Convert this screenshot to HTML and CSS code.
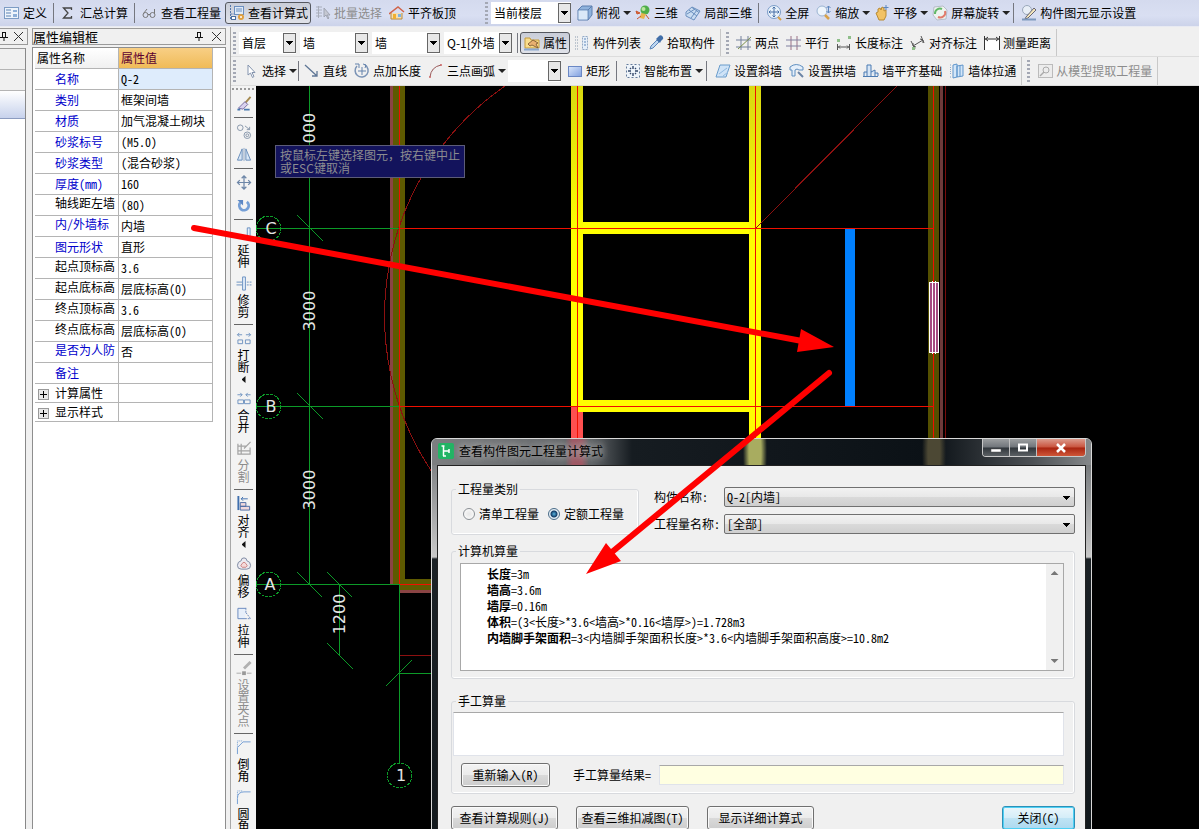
FILE: index.html
```html
<!DOCTYPE html>
<html lang="zh-CN">
<head>
<meta charset="utf-8">
<title>查看构件图元工程量计算式</title>
<link rel="stylesheet" href="styles.css">
</head>
<body>
<div class="app">
  <header class="bar bar-top">
    <div class="group group-first">
      <button class="tool"><svg class="ico" viewBox="0 0 16 16"><rect x=".5" y="2.5" width="14" height="11" fill="#eef4fb" stroke="#7d9cc4"/><path d="M2 5h5M2 8h5M2 11h5" stroke="#5b82b5"/><rect x="9" y="5" width="4" height="2" fill="#8fb0d8"/><rect x="9" y="9" width="4" height="3" fill="#8fb0d8"/></svg>定义</button>
      <i class="sep"></i>
      <button class="tool"><svg class="ico" viewBox="0 0 16 16"><path d="M10.500 5V3H2.500L7 8L2.500 13H10.500V11" fill="none" stroke="#444" stroke-width="1.300"/></svg>汇总计算</button>
      <i class="sep"></i>
      <button class="tool"><svg class="ico" viewBox="0 0 16 16"><g fill="none" stroke="#777"><circle cx="3.500" cy="10" r="2.500"/><circle cx="10.500" cy="10" r="2.500"/><path d="M6 10q1-2 2 0M1.500 8.500L5 4M12.500 8.500V4"/></g></svg>查看工程量</button>
      <button class="tool pressed"><svg class="ico" viewBox="0 0 16 16"><path d="M1.500 0v14H7M1.500 9H6" fill="none" stroke="#5577aa" stroke-dasharray="2 1"/><rect x="5.500" y="1.500" width="9" height="8" fill="#dfeaf7" stroke="#6b8fc0"/><path d="M7 4h6M7 6h6" stroke="#6b8fc0"/><rect x="2.500" y="11.500" width="4" height="3" fill="#fff" stroke="#4b6fa0"/><circle cx="12" cy="12" r="3" fill="#e0a040"/><circle cx="12" cy="12" r="1" fill="#fff"/></svg>查看计算式</button>
      <button class="tool" disabled><svg class="ico" viewBox="0 0 16 16"><path d="M1 2h6M1 5h6M1 8h6M1 11h6M3.500 1v12" stroke="#a9aebb" fill="none"/><path d="M9 3v9l2-2 2 4 1-1-2-3h3z" fill="#c5c8d2" stroke="#a0a5b2"/></svg>批量选择</button>
      <button class="tool"><svg class="ico" viewBox="0 0 16 16"><path d="M2 8v6h11V8" fill="#f5dfb0" stroke="#b88b3c"/><path d="M0 9L9 2l6 5" fill="none" stroke="#d0644a" stroke-width="1.500"/><path d="M4 9h3v5H4z" fill="#f0b030"/><rect x="9" y="9" width="3" height="3" fill="#7db4e6"/></svg>平齐板顶</button>
    </div>
    <div class="group">
      <i class="grip"></i>
      <select class="combo combo-floor" aria-label="楼层范围"><option>当前楼层</option></select>
      <button class="tool menu"><svg class="ico" viewBox="0 0 16 16"><path d="M1 5l4-4h10v9l-4 5H1z" fill="#8fb2dc" stroke="#5d7fae"/><path d="M1 5h10l4-4M11 5v10" fill="none" stroke="#5d7fae"/><rect x="1.500" y="5.500" width="9" height="9" fill="#dbe9f8"/></svg>俯视<i class="caret"></i></button>
      <button class="tool"><svg class="ico" viewBox="0 0 16 16"><circle cx="10" cy="5" r="4.500" fill="#4fae4a"/><circle cx="8.500" cy="4" r="2" fill="#bde6a0"/><path d="M6 8l5 1-2 5-4-1z" fill="#e8b54e"/><path d="M1 6l4 2-3 1zM2 14l4-3M14 14l-3-4" stroke="#c8552e" fill="#e06b3e"/></svg>三维</button>
      <button class="tool"><svg class="ico" viewBox="0 0 16 16"><path d="M1 7l6-5 8 4-6 9-8-4z" fill="#c9dcf2" stroke="#6a8fbe"/><path d="M4 5l8 6M7 2.500l7 5M2 9l8-5M6 13l6-8" stroke="#6a8fbe" fill="none"/></svg>局部三维</button>
      <i class="sep"></i>
      <button class="tool"><svg class="ico" viewBox="0 0 16 16"><circle cx="8" cy="7" r="6.500" fill="#e9f2fb" stroke="#7a9cc8"/><path d="M8 2v10M3 7h10M6.500 3.500L8 2l1.500 1.500M6.500 10.500L8 12l1.500-1.500M4.500 5.500L3 7l1.500 1.500M11.500 5.500L13 7l-1.500 1.500" stroke="#466fa6" fill="none"/><path d="M12 12l3 3" stroke="#d8a24a" stroke-width="2"/></svg>全屏</button>
      <button class="tool menu"><svg class="ico" viewBox="0 0 16 16"><circle cx="6" cy="6" r="5" fill="#eef5fc" stroke="#9bb4d2"/><path d="M9 10l4 4" stroke="#d8a24a" stroke-width="2.500"/><path d="M12.500 1v7M10.500 3l2-2 2 2M10.500 6l2 2 2-2" stroke="#5c86bd" fill="none"/></svg>缩放<i class="caret"></i></button>
      <button class="tool menu"><svg class="ico" viewBox="0 0 16 16"><path d="M2 8l2-1V4l2-1 1 2 1-3 2 1v3l2-1v6l-2 4H5z" fill="#f2c264" stroke="#b98a33"/><path d="M12 0v5M9.500 2.500h5" stroke="#5c86bd"/></svg>平移<i class="caret"></i></button>
      <button class="tool menu"><svg class="ico" viewBox="0 0 16 16"><path d="M2 2l9-1 4 4-1 9-9 1-4-5z" fill="#eef3ee" stroke="#b5bcc8"/><path d="M3 9a5 5 0 0 1 7-5" fill="none" stroke="#62b868" stroke-width="2"/><path d="M13 6a5 5 0 0 1-7 6" fill="none" stroke="#e07a6a" stroke-width="2"/></svg>屏幕旋转<i class="caret"></i></button>
      <i class="sep"></i>
      <button class="tool"><svg class="ico" viewBox="0 0 16 16"><circle cx="6" cy="5" r="4.500" fill="#e8eef6" stroke="#9aa7ba"/><path d="M5 12L13 3l2 2-8 8-3 1z" fill="#f4e6bb" stroke="#667"/><path d="M1 14.500h14" stroke="#7d98bd" stroke-width="2"/></svg>构件图元显示设置</button>
    </div>
  </header>

  <div class="main">
    <aside class="stub">
      <div class="panel-title"><svg class="pin" viewBox="0 0 8 9"><path d="M2.500 0v5M5.500 0v5M2 .5h4M0 5.500h8M4 6v3" stroke="#111" fill="none"/></svg><button class="close" aria-label="关闭"></button></div>
      <div class="stub-body"><div class="stub-cell"></div><div class="stub-cell"></div><div class="stub-sel"></div></div>
    </aside>

    <aside class="props">
      <div class="panel-title"><span class="title-text">属性编辑框</span><svg class="pin" viewBox="0 0 8 9"><path d="M2.500 0v5M5.500 0v5M2 .5h4M0 5.500h8M4 6v3" stroke="#111" fill="none"/></svg><button class="close" aria-label="关闭"></button></div>
      <div class="props-body">
        <table class="grid">
          <colgroup><col class="c-name"><col></colgroup>
          <thead><tr><th>属性名称</th><th class="vh">属性值</th></tr></thead>
          <tbody>
            <tr><th class="b">名称</th><td class="cur">Q-2</td></tr>
            <tr><th class="b">类别</th><td>框架间墙</td></tr>
            <tr><th class="b">材质</th><td>加气混凝土砌块</td></tr>
            <tr><th class="b">砂浆标号</th><td>(M5.0)</td></tr>
            <tr><th class="b">砂浆类型</th><td>(混合砂浆)</td></tr>
            <tr><th class="b">厚度(mm)</th><td>160</td></tr>
            <tr><th class="up">轴线距左墙</th><td>(80)</td></tr>
            <tr><th class="b up">内/外墙标</th><td>内墙</td></tr>
            <tr><th class="b">图元形状</th><td>直形</td></tr>
            <tr><th class="up">起点顶标高</th><td>3.6</td></tr>
            <tr><th class="up">起点底标高</th><td>层底标高(0)</td></tr>
            <tr><th class="up">终点顶标高</th><td>3.6</td></tr>
            <tr><th class="up">终点底标高</th><td>层底标高(0)</td></tr>
            <tr><th class="b up">是否为人防</th><td>否</td></tr>
            <tr><th class="b">备注</th><td></td></tr>
            <tr class="fold"><th><button class="plus" aria-label="展开计算属性"></button>计算属性</th><td></td></tr>
            <tr class="fold"><th><button class="plus" aria-label="展开显示样式"></button>显示样式</th><td></td></tr>
          </tbody>
        </table>
      </div>
    </aside>

    <section class="work">
      <div class="bar bar-comp">
        <div class="group bordered">
          <i class="grip"></i>
          <select class="combo combo-a" aria-label="楼层"><option>首层</option></select>
          <select class="combo combo-b" aria-label="构件大类"><option>墙</option></select>
          <select class="combo combo-b" aria-label="构件类型"><option>墙</option></select>
          <select class="combo combo-b" aria-label="构件"><option>Q-1[外墙</option></select>
          <i class="sep tight"></i>
          <button class="tool pressed"><svg class="ico" viewBox="0 0 16 16"><path d="M1 3h5l1 2h8v8H1z" fill="#f9dd8c" stroke="#c49a3a"/><path d="M4 9l5-4 5 3-2 1 2 4-6-3-2 1z" fill="#e8b070" stroke="#75502a" stroke-width=".8"/><path d="M0 14.500h15" stroke="#8aa8cf" stroke-width="2"/></svg>属性</button>
          <button class="tool"><svg class="ico" viewBox="0 0 16 16"><path d="M1 2h4M1 5h4M1 8h4M1 11h4M1 14h4" stroke="#8899ad" stroke-dasharray="1 1"/><rect x="8.500" y="1.500" width="5" height="13" fill="#e6eff9" stroke="#93a9c4" stroke-dasharray="2 1"/><path d="M10 4h2M10 7h2M10 10h2" stroke="#5f86b8"/></svg>构件列表</button>
          <button class="tool"><svg class="ico" viewBox="0 0 16 16"><path d="M2 14l1-3 6-6 2 2-6 6z" fill="#bcd5f0" stroke="#5b85b8"/><path d="M8 4l4 4 1-2 2-2c1-2-2-5-4-3L9 3z" fill="#416ea8"/></svg>拾取构件</button>
        </div>
        <div class="group bordered">
          <i class="grip"></i>
          <button class="tool"><svg class="ico" viewBox="0 0 16 16"><path d="M5 1v14M12 1v14M0 5h15M0 12h15" stroke="#74819c"/><path d="M2 14L15 2" stroke="#7a8f4a"/></svg>两点</button>
          <button class="tool"><svg class="ico" viewBox="0 0 16 16"><path d="M5 1v14M11 1v14" stroke="#9a7186"/><path d="M0 5h15M0 11h15" stroke="#8080a0"/></svg>平行</button>
          <button class="tool"><svg class="ico" viewBox="0 0 16 16"><rect x="1" y="4" width="3" height="3" fill="#8fbf8a"/><rect x="12" y="1" width="3" height="3" fill="#8fbf8a"/><path d="M1.500 9v6M13.500 9v6M2 12h11M4 10.500L2.500 12 4 13.500M11 10.500l1.500 1.500-1.500 1.500" fill="none" stroke="#555"/></svg>长度标注</button>
          <button class="tool"><svg class="ico" viewBox="0 0 16 16"><path d="M1 6l4 8M11 1l3 7M3 11l10-6M3 8v3l3 1M10 4l3 1v3" fill="none" stroke="#555"/><rect x="2" y="12" width="3" height="3" fill="#8fbf8a"/></svg>对齐标注</button>
          <button class="tool"><svg class="ico" viewBox="0 0 16 16"><rect y="5" width="16" height="10" fill="#fff"/><path d="M.5 1v14M15.500 1v14M1 4h14M4 2L1.500 4 4 6M12 2l2.500 2L12 6" fill="none" stroke="#333"/></svg>测量距离</button>
        </div>
      </div>
      <div class="bar bar-draw">
        <div class="group bordered">
          <i class="grip"></i>
          <button class="tool menu"><svg class="ico" viewBox="0 0 16 16"><path d="M5 2v10l2.500-2 2 4.500 1.500-1-2-4h3z" fill="#fff" stroke="#8494ae"/></svg>选择<i class="caret"></i></button>
          <i class="sep tight"></i>
          <button class="tool"><svg class="ico" viewBox="0 0 16 16"><path d="M1 2l12 11M13 8v5H8" fill="none" stroke="#5f7796" stroke-width="1.300"/></svg>直线</button>
          <button class="tool"><svg class="ico" viewBox="0 0 16 16"><path d="M3 3a6.500 6.500 0 1 0 8-1" fill="none" stroke="#7a93b5" stroke-width="1.500"/><path d="M1 1h4v4M8 4v8M4 8h8M9 1l3 1-1 3" fill="none" stroke="#6583ac"/></svg>点加长度</button>
          <button class="tool menu"><svg class="ico" viewBox="0 0 16 16"><path d="M2 14Q3 4 13 2" fill="none" stroke="#9a5a5a"/><circle cx="2" cy="14" r="1" fill="#c66"/><circle cx="13" cy="2" r="1" fill="#c66"/></svg>三点画弧<i class="caret"></i></button>
          <select class="combo combo-c" aria-label="参数"><option></option></select>
          <button class="tool"><svg class="ico" viewBox="0 0 16 16"><defs><linearGradient id="rg" x2="1" y2="1"><stop stop-color="#dce8fb"/><stop offset="1" stop-color="#7f9fe0"/></linearGradient></defs><rect x="1.500" y="3.500" width="13" height="10" fill="url(#rg)" stroke="#6a87c4"/></svg>矩形</button>
          <i class="sep"></i>
          <button class="tool menu"><svg class="ico" viewBox="0 0 16 16"><rect x="1.500" y="1.500" width="13" height="13" fill="#eef4fa" stroke="#637a9a" stroke-dasharray="2 2"/><path d="M8 3v3M8 10v3M3 8h3M10 8h3M5 5l1 1M11 5l-1 1M5 11l1-1M11 11l-1-1" stroke="#33476a" stroke-width="1.400"/></svg>智能布置<i class="caret"></i></button>
          <i class="sep"></i>
          <button class="tool"><svg class="ico" viewBox="0 0 16 16"><path d="M1 14L5 2h10l-4 12z" fill="#cfe3f7" stroke="#6a9ccb"/><path d="M4 11l8-6M8 13l5-4" stroke="#8fb9e0"/></svg>设置斜墙</button>
          <button class="tool"><svg class="ico" viewBox="0 0 16 16"><path d="M1 7V4q6-5 13 0v3h-4q-2-2-4 0v6H3V7z" fill="#e5effa" stroke="#5f8fc0"/><path d="M9 9l5 5" stroke="#6b84a5" stroke-width="2"/></svg>设置拱墙</button>
          <button class="tool"><svg class="ico" viewBox="0 0 16 16"><path d="M4 13V2h4v11M1 13V9h3M8 9l4-2v6M0 13.500h15M12 10h3v3" fill="#d7e6f6" stroke="#4b7bb2"/></svg>墙平齐基础</button>
          <button class="tool"><svg class="ico" viewBox="0 0 16 16"><path d="M1 2h2M1 14h2M1.500 4v8" stroke="#8ba9cc" stroke-dasharray="1 1"/><path d="M4 2l4-1v13l-4 1zM8 3l6-1v11l-6 1z" fill="#d4e6f8" stroke="#5f95cb"/><path d="M11 3v10" stroke="#5f95cb"/></svg>墙体拉通</button>
        </div>
        <div class="group bordered">
          <i class="grip"></i>
          <button class="tool" disabled><svg class="ico" viewBox="0 0 16 16"><rect x="1.500" y="1.500" width="14" height="13" fill="#ececec" stroke="#bbb"/><circle cx="9" cy="7" r="3" fill="none" stroke="#aaa"/><path d="M7 9l-4 4" stroke="#aaa" stroke-width="1.500"/></svg>从模型提取工程量</button>
        </div>
      </div>

      <div class="stage">
        <nav class="vbar">
          <i class="hgrip"></i>
          <button class="vtool" aria-label="格式刷"><svg class="ico" viewBox="0 0 16 16"><path d="M15 1L8 9" stroke="#a58a50" stroke-width="2"/><path d="M9 6l3 3-5 5-5-1z" fill="#d9d2ee" stroke="#7569a0"/><path d="M1 14.500h3M8 14.500h6" stroke="#4878ae" stroke-width="2"/></svg></button>
          <i class="hsep"></i>
          <button class="vtool" aria-label="复制"><svg class="ico" viewBox="0 0 16 16"><g fill="none" stroke="#8494a9"><circle cx="4" cy="4" r="3"/><circle cx="11.500" cy="12" r="3.500"/><circle cx="11.500" cy="12" r="1.500"/><path d="M9 2l5 4M14 3v3h-3"/></g></svg></button>
          <button class="vtool" aria-label="镜像"><svg class="ico" viewBox="0 0 16 16"><path d="M6 2v12H1zM10 2v12h5z" fill="#d8e7f6" stroke="#648bb9"/><path d="M8 1v14" stroke="#8ba4c3"/></svg></button>
          <i class="hsep"></i>
          <button class="vtool" aria-label="移动"><svg class="ico" viewBox="0 0 16 16"><path d="M8 1v14M1 8h14M5.500 3.500L8 1l2.500 2.500M5.500 12.500L8 15l2.500-2.500M3.500 5.500L1 8l2.500 2.500M12.500 5.500L15 8l-2.500 2.500" fill="none" stroke="#6e87a8" stroke-width="1.300"/></svg></button>
          <button class="vtool" aria-label="旋转"><svg class="ico" viewBox="0 0 16 16"><path d="M4 5a5 5 0 1 0 7-1" fill="none" stroke="#759fd6" stroke-width="3"/><path d="M1 2h6v6z" fill="#5c87c4"/></svg></button>
          <i class="hsep"></i>
          <button class="vtool"><svg class="ico" viewBox="0 0 16 16"><path d="M11.500 2h3v12h-3z" fill="#e4eefa" stroke="#688fc0"/><path d="M2 11.500h8" stroke="#688fc0" stroke-dasharray="2 1"/></svg><span>延伸</span></button>
          <button class="vtool"><svg class="ico" viewBox="0 0 16 16"><path d="M6.500 1h3v14h-3zM0 6.500h6M0 9.500h6" fill="#e4eefa" stroke="#688fc0"/><path d="M11 6.500h5M11 9.500h5" stroke="#688fc0" stroke-dasharray="2 1"/></svg><span>修剪</span></button>
          <i class="hsep"></i>
          <button class="vtool"><svg class="ico" viewBox="0 0 16 16"><path d="M1 4h5M15 4h-5M3 2L1 4l2 2M13 2l2 2-2 2M1.500 9.500h5v4h-5zM9.500 9.500h5v4h-5z" fill="none" stroke="#6d91bf"/></svg><span>打断</span><i class="vcaret"></i></button>
          <button class="vtool"><svg class="ico" viewBox="0 0 16 16"><path d="M1 4h5M15 4h-5M4 2l2 2-2 2M12 2l-2 2 2 2M1.500 9.500h6v4h-6zM8.500 9.500h6v4h-6z" fill="none" stroke="#6d91bf"/></svg><span>合并</span></button>
          <button class="vtool" disabled><svg class="ico" viewBox="0 0 16 16"><path d="M1 5.500h9M1 10.500h13M1.500 3v11h13V7M5 3v11M15 1L8 8" fill="none" stroke="#a4a4a4" stroke-width="1.300"/></svg><span>分割</span></button>
          <i class="hsep"></i>
          <button class="vtool"><svg class="ico" viewBox="0 0 16 16"><path d="M2 0v15" stroke="#3f6fae" stroke-width="2"/><path d="M5 3h7M7 1L5 3l2 2" fill="none" stroke="#3f6fae"/><path d="M4 7h6v4H4zM4 11h10v4H4z" fill="#f1d8dc" stroke="#4b6ba4"/></svg><span>对齐</span><i class="vcaret"></i></button>
          <button class="vtool"><svg class="ico" viewBox="0 0 16 16"><path d="M5 5q0-3 3-3t3 3q4 1 4 5t-4 4H5q-4 0-4-4t4-5z" fill="#eceaf0" stroke="#7b86a0"/><path d="M6 8q2-3 4 0 3 3 0 4H6q-3-1 0-4z" fill="#f5dada" stroke="#cc8080"/></svg><span>偏移</span></button>
          <button class="vtool"><svg class="ico" viewBox="0 0 16 16"><path d="M10 2.500H1.500v11H9" fill="#e7effa" stroke="#6787bd"/><path d="M10 2v6M9 13.500h6L10 7" fill="none" stroke="#6787bd" stroke-dasharray="2 1"/></svg><span>拉伸</span></button>
          <i class="hsep"></i>
          <button class="vtool" disabled><svg class="ico" viewBox="0 0 16 16"><path d="M15 1L8 8" stroke="#b1b1b1" stroke-width="3"/><path d="M0 13h5M11 13h5" stroke="#aaa"/><rect x="6" y="11" width="4" height="4" fill="#999"/></svg><span>设置夹点</span></button>
          <i class="hsep"></i>
          <button class="vtool"><svg class="ico" viewBox="0 0 16 16"><path d="M1 15V8l6-6h8" fill="none" stroke="#6f9bd2"/><path d="M1 7V1h6" fill="none" stroke="#6f9bd2" stroke-dasharray="1 1"/></svg><span>倒角</span></button>
          <button class="vtool"><svg class="ico" viewBox="0 0 16 16"><path d="M1 15V9q0-7 7-7h7" fill="none" stroke="#6f9bd2"/><path d="M1 7V1h6" fill="none" stroke="#6f9bd2" stroke-dasharray="1 1"/></svg><span>圆角</span></button>
        </nav>
        <div class="canvas">
          <svg class="plan" width="100%" height="100%">
            <defs>
              <linearGradient id="yw" gradientUnits="userSpaceOnUse" x1="0" y1="86" x2="0" y2="240"><stop stop-color="#d9d910"/><stop offset="1" stop-color="#ff0"/></linearGradient>
            </defs>
            <g transform="translate(-256 -86)" shape-rendering="crispEdges">
              <path d="M390 86h3v498h-3zM399 590h60v3h-60z" fill="#8a4444"/>
              <path d="M393 86h12v493h54v11h-60v-6h-6z" fill="#5e5a00"/>
              <path d="M928 86h11v400h-11z" fill="#544f00"/>
              <path d="M940 86h3v400h-3z" fill="#6e3a3a"/>
              <path d="M945.500 86v400" stroke="#7a0c0c"/>
              <path d="M571 86h12v320h-12zM749 86h12v352h-12z" fill="url(#yw)"/>
              <path d="M583 222h166v12H583zM578 400h171v12H578z" fill="#ff0"/>
              <path d="M571 407h12v40h-12z" fill="#ff5050"/><path d="M577 407h6v5h-6z" fill="#ff0"/>
              <path d="M845 229h10v177h-10z" fill="#0080ff"/>
              <path d="M505 86A280 280 0 0 0 432 472M756 228L897 86" fill="none" stroke="#8c1010"/>
              <path d="M400 655.500h40" stroke="#8c1010"/>
              <g fill="#f01000">
                <path d="M399 86h1v498h-1zM400 584h40v1h-40zM577 86h1v352h-1zM755 86h1v352h-1zM933 86h1v352h-1z"/>
                <path d="M400 228h534v1h-534zM400 406h534v1h-534z"/>
              </g>
              <rect x="929.500" y="282.500" width="9" height="70" fill="#a44a80" stroke="#fff"/>
              <path d="M932.500 281v73M935.500 281v73" stroke="#fff"/>
              <g fill="none" stroke="#0c9a28">
                <path d="M309.500 86v498M256 228.500h143M256 406.500h143M256 584.500h143.500v178M339.500 584v71M400 673.500h40"/>
                <path d="M297 215l26 26M297 393l26 26M297 572l25 25M327 572l25 25M327 643l26 26M386 686l26-26"/>
                <g stroke-dasharray="3 1"><circle cx="268.500" cy="228.500" r="12.500"/><circle cx="268.500" cy="406.500" r="12.500"/><circle cx="268.500" cy="584.500" r="12.500"/><circle cx="399.500" cy="775.500" r="12.500"/></g>
              </g>
              <g class="mark">
                <text x="271" y="234">C</text><text x="271" y="412">B</text><text x="270" y="590">A</text><text x="401" y="781">1</text>
                <text transform="translate(315 128) rotate(-90)">000</text>
                <text transform="translate(315 311) rotate(-90)">3000</text>
                <text transform="translate(315 490) rotate(-90)">3000</text>
                <text transform="translate(345 614) rotate(-90)">1200</text>
              </g>
            </g>
          </svg>
          <p class="hint">按鼠标左键选择图元，按右键中止<br>或ESC键取消</p>
        </div>
      </div>
    </section>
  </div>

  <section class="dialog" role="dialog" aria-labelledby="dlg-title">
    <div class="dlg-head">
      <svg class="dlg-ico" viewBox="0 0 16 16"><rect width="16" height="16" rx="2" fill="#22b464"/><path d="M5.500 3v10M5.500 8h6M3.500 3h3M5 13h3M11 6v4" fill="none" stroke="#fff" stroke-width="1.500"/></svg>
      <h1 class="dlg-title" id="dlg-title">查看构件图元工程量计算式</h1>
      <div class="win">
        <button class="wbtn" aria-label="最小化"><svg viewBox="0 0 12 10" width="12" height="10"><path d="M1 6h10v3H1z" fill="#fff" stroke="#555" stroke-width=".5"/></svg></button>
        <button class="wbtn" aria-label="最大化"><svg viewBox="0 0 12 10" width="12" height="10"><rect x="2" y="1.500" width="8" height="6" fill="none" stroke="#fff" stroke-width="2"/></svg></button>
        <button class="wbtn wclose" aria-label="关闭窗口"><svg viewBox="0 0 12 10" width="12" height="10"><path d="M2 1l8 8M10 1L2 9" stroke="#fff" stroke-width="2.500"/></svg></button>
      </div>
    </div>
    <div class="client">
      <div class="top">
        <fieldset class="box radios">
          <legend>工程量类别</legend>
          <label><input type="radio" name="kind">清单工程量</label>
          <label><input type="radio" name="kind" checked>定额工程量</label>
        </fieldset>
        <div class="pick">
          <label for="comp">构件名称:</label>
          <select class="drop" id="comp"><option>Q-2[内墙]</option></select>
          <label for="qty">工程量名称:</label>
          <select class="drop" id="qty"><option>[全部]</option></select>
        </div>
      </div>
      <fieldset class="box auto">
        <legend>计算机算量</legend>
        <div class="result">
          <div class="lines">
            <p><b>长度</b>=3m</p>
            <p><b>墙高</b>=3.6m</p>
            <p><b>墙厚</b>=0.16m</p>
            <p><b>体积</b>=(3&lt;长度&gt;*3.6&lt;墙高&gt;*0.16&lt;墙厚&gt;)=1.728m3</p>
            <p><b>内墙脚手架面积</b>=3&lt;内墙脚手架面积长度&gt;*3.6&lt;内墙脚手架面积高度&gt;=10.8m2</p>
          </div>
          <div class="scroll"><i class="tri-up"></i><i class="tri-down"></i></div>
        </div>
      </fieldset>
      <fieldset class="box manual">
        <legend>手工算量</legend>
        <textarea class="note" aria-label="手工算量"></textarea>
        <div class="manual-row">
          <button class="btn w-s">重新输入(R)</button>
          <label for="res">手工算量结果=</label>
          <input class="res" id="res" type="text" readonly>
        </div>
      </fieldset>
      <div class="actions">
        <button class="btn w-m">查看计算规则(J)</button>
        <button class="btn w-l">查看三维扣减图(T)</button>
        <button class="btn w-m">显示详细计算式</button>
        <button class="btn primary">关闭(C)</button>
      </div>
    </div>
  </section>

  <svg class="arrows" width="100%" height="100%">
    <g stroke="#f00" stroke-width="6" stroke-linecap="round"><path d="M194 228L802 341M829 373L612 552"/></g>
    <path d="M834 347L801 329L797 352zM586 574L606 543L621 561z" fill="#f00"/>
  </svg>
</div>
</body>
</html>
```
FILE: styles.css
```css
* { box-sizing: border-box; }
body {
  margin: 0;
  font: 12px/16px "Noto Sans CJK SC", sans-serif;
  color: #000;
  background: #f0f0f0;
}
button, input, select, textarea { font: inherit; color: inherit; }
p { margin: 0; }
i { display: block; flex: none; }

.app {
  position: relative;
  display: flex;
  flex-direction: column;
  height: 100vh;
  overflow: hidden;
}

/* toolbars */
.bar { display: flex; flex: none; height: 29px; background: #f0f0f0; border-bottom: 1px solid #dcdcdc; }
.bar-top { height: 27px; background: linear-gradient(#d4daee, #d9dff2 60%, #ccd3ea); border-bottom: 1px solid #e8eaf2; }
.bar-comp { height: 30px; padding-top: 2px; }
.group { display: flex; align-items: center; white-space: nowrap; padding-right: 2px; }
.group-first { padding-right: 24px; }
.bordered { border-right: 1px solid #c8c8c8; }
.bordered + .bordered { padding-left: 3px; }
.tool {
  display: flex;
  align-items: center;
  gap: 3px;
  height: 22px;
  padding: 0 3px 0 4px;
  border: 0;
  background: none;
  white-space: nowrap;
}
.menu { padding-right: 0; }
.tool:disabled, .vtool:disabled { color: #8c8c8c; }
.pressed {
  border: 1px solid #55585f;
  border-radius: 3px;
  background: linear-gradient(#c9cdd8, #e0e2e9);
  padding: 0 2px 0 3px;
  margin: 0 0 0 1px;
}
.ico { flex: none; width: 16px; height: 16px; }
.sep { width: 1px; height: 20px; margin: 0 3px; background: #75777f; }
.bar-draw .sep { margin-right: 4px; }
.bar .tight { margin: 0 1px; }
.grip { width: 3px; height: 22px; margin: 0 3px 0 2px; background: repeating-linear-gradient(#a4a8b4 0 2px, transparent 2px 4px); }
.caret { width: 8px; height: 4px; background: #222; clip-path: polygon(0 0, 100% 0, 50% 100%); }
.combo {
  appearance: none;
  height: 22px;
  padding: 0 14px 0 3px;
  border: 0;
  border-radius: 0;
  overflow: hidden;
  background:
    linear-gradient(#000, #000) right 3px top 9px / 7px 1px no-repeat,
    linear-gradient(#000, #000) right 4px top 10px / 5px 1px no-repeat,
    linear-gradient(#000, #000) right 5px top 11px / 3px 1px no-repeat,
    linear-gradient(#000, #000) right 6px top 12px / 1px 1px no-repeat,
    linear-gradient(#e8e8e8, #e8e8e8) right 1px center / 11px 18px no-repeat,
    linear-gradient(#666, #666) right center / 13px 20px no-repeat,
    #fff;
}
.combo-floor { width: 80px; margin-right: 2px; }
.combo-a { width: 57px; margin-right: 4px; }
.combo-b { width: 68px; margin-right: 4px; }
.combo-c { width: 53px; margin: 0 2px; }

.main { display: flex; flex: 1; min-height: 0; }

/* docked panels */
.panel-title {
  display: flex;
  flex: none;
  align-items: center;
  height: 17px;
  margin-top: 1px;
  border: 1px solid #9a9a9a;
  background: #f0f0f0;
}
.title-text { flex: 1; line-height: 15px; }
.pin { width: 8px; height: 9px; margin-right: 9px; }
.close {
  width: 9px;
  height: 9px;
  margin-right: 4px;
  padding: 0;
  border: 0;
  background:
    linear-gradient(45deg, transparent 45%, #333 45% 55%, transparent 55%),
    linear-gradient(-45deg, transparent 45%, #333 45% 55%, transparent 55%);
}
.stub { flex: none; width: 28px; }
.stub .panel-title { justify-content: flex-end; border-left: 0; }
.stub .pin { margin-right: 6px; }
.stub-body { height: 100%; margin: 3px 2px 0 0; border-top: 1px solid #999; border-right: 1px solid #888; background: #fff; }
.stub-cell { height: 21px; background: #f0f0f0; border-bottom: 1px solid #b4b4b4; }
.stub-sel { height: 28px; background: linear-gradient(#fff, #c7d2ec); border-bottom: 1px solid #8c9cc0; }

.props { display: flex; flex-direction: column; flex: none; width: 194px; margin: 0 4px; }
.title-text { font-size: 13px; }
.props-body { flex: 1; min-height: 0; margin-top: 2px; padding-left: 2px; border: 1px solid #8e8e8e; border-bottom: 0; background: #fff; font-family: "Noto Sans Mono CJK SC", "Noto Sans CJK SC", monospace; }
.grid { width: 178px; border-collapse: separate; border-spacing: 0; table-layout: fixed; }
.c-name { width: 84px; }
.grid th, .grid td {
  height: 21px;
  padding: 0 0 0 2px;
  border: solid #b4b4b4;
  border-width: 0 1px 1px 0;
  font-weight: normal;
  text-align: left;
  line-height: 16px;
  white-space: nowrap;
  overflow: hidden;
}
.grid tbody th { padding-left: 20px; }
.grid thead th { background: linear-gradient(#fff, #f0f0f0); }
.grid thead .vh { background: linear-gradient(#f8cf85, #f0bb58); color: #5c0030; }
.grid .b { color: #00c; }
.grid .up { padding-bottom: 4px; }
.grid .cur { background: #deecfc; }
.grid .fold th, .grid .fold td { height: 19px; }
.grid .fold th { padding-left: 3px; }
.plus {
  width: 11px;
  height: 11px;
  margin-right: 6px;
  padding: 0;
  border: 1px solid #999;
  vertical-align: -1px;
  background:
    linear-gradient(#000, #000) center / 7px 1px no-repeat,
    linear-gradient(#000, #000) center / 1px 7px no-repeat,
    #e8e8e8;
}

/* drawing area */
.work { display: flex; flex-direction: column; flex: 1; min-width: 0; border-left: 1px solid #a8a8a8; }
.stage { display: flex; flex: 1; min-height: 0; }
.vbar { display: flex; flex-direction: column; flex: none; width: 25px; align-items: center; overflow: hidden; background: #f3f3f3; padding-top: 2px; }
.hgrip { width: 24px; height: 2px; margin-bottom: 2px; background: repeating-linear-gradient(90deg, #999 0 2px, transparent 2px 4px); }
.hsep { width: 19px; height: 1px; margin: 2px 0; background: #666; }
.vtool { display: flex; flex: none; flex-direction: column; align-items: center; gap: 3px; width: 24px; padding: 4px 0; border: 0; background: none; }
.vtool .ico { height: 15px; }
.vtool span { width: 12px; line-height: 12px; white-space: normal; word-break: break-all; }
.vcaret { width: 4px; height: 7px; background: #111; clip-path: polygon(100% 0, 100% 100%, 0 50%); }
.canvas { position: relative; flex: 1; min-width: 0; background: #000; }
.plan { display: block; }
.mark { font: 16px "DejaVu Sans", sans-serif; fill: #e4e4e4; text-anchor: middle; }
.hint {
  position: absolute;
  left: 19px;
  top: 59px;
  padding: 2px 4px 3px;
  border: 1px solid #5c5c78;
  background: #13135c;
  color: #8c8c90;
  line-height: 13px;
  white-space: nowrap;
}

/* dialog */
.dialog {
  position: absolute;
  left: 431px;
  right: 107px;
  top: 438px;
  padding: 0 5px;
  border: 1px solid #d8d8d8;
  border-radius: 6px 6px 0 0;
  background:
    linear-gradient(#6b6e70, #8c8e90 40px, #c8c8c8 118px, #1c2226 120px, #12181c) left / 5px 100% no-repeat,
    linear-gradient(#5d6163, #85888a 40px, #c8c8c8 118px, #1c2226 120px, #12181c) right / 5px 100% no-repeat,
    #101519;
  font-family: "Noto Sans Mono CJK SC", "Noto Sans CJK SC", monospace;
}
.dlg-head {
  display: flex;
  align-items: center;
  height: 26px;
  margin: 0 -5px;
  padding: 0 0 3px 6px;
  border-radius: 5px 5px 0 0;
  background:
    radial-gradient(ellipse 12px 60px at 323px 50%, #a8ac60 0 50%, transparent),
    radial-gradient(ellipse 12px 60px at 502px 50%, #4c4834 0 50%, transparent),
    radial-gradient(ellipse 12px 60px at 145px 50%, #a05864 0 40%, transparent),
    linear-gradient(90deg, #7c7e80, #606467 160px, #161c21 200px, #0b1116 500px, #4c5054 600px, #85888a);
}
.dlg-ico { width: 16px; height: 16px; }
.dlg-title {
  flex: 1;
  margin: 0 0 0 5px;
  font: 12px/16px "Noto Sans CJK SC", sans-serif;
  text-shadow: 0 0 6px #aaa, 0 0 8px #aaa, 0 0 10px #999;
}
.win { display: flex; align-self: flex-start; margin-right: 5px; border: 1px solid #c8c8c8; border-top: 0; border-radius: 0 0 4px 4px; overflow: hidden; }
.wbtn { display: flex; align-items: center; justify-content: center; width: 27px; height: 17px; padding: 0; border: 0; border-right: 1px solid #c0c0c0; background: linear-gradient(#9b9ea0, #70757a 48%, #30363b 52%, #5b6064); }
.wclose { width: 48px; border-right: 0; background: linear-gradient(#dc9a8c, #c9543e 48%, #a82410 52%, #cf5638); }
.client { padding: 15px 10px 20px 13px; border: 1px solid #222; background: #f0f0f0; }
.top { display: flex; gap: 15px; }
.box { min-width: 0; margin: 0; padding: 0; border: 1px solid #d8dade; border-radius: 3px; box-shadow: inset 0 -1px #fff, inset -1px 0 #fff; }
.box legend { padding: 0 2px; line-height: 16px; }
.radios { width: 188px; height: 54px; padding: 9px 0 0 11px; white-space: nowrap; }
.radios legend { margin-left: -7px; }
.radios label { display: inline-flex; align-items: center; gap: 4px; margin-right: 3px; line-height: 16px; }
.radios input {
  appearance: none;
  width: 12px;
  height: 12px;
  margin: 0;
  border: 1px solid #8a8f94;
  border-radius: 50%;
  background: radial-gradient(#e6e6e6, #fff);
}
.radios input:checked { border-color: #4a6c88; background: radial-gradient(circle, #58b4e0 0, #123c68 3px, #e4eef6 4px); }
.pick { flex: 1; display: grid; grid-template-columns: 70px 1fr; row-gap: 7px; align-content: start; align-items: center; padding-top: 6px; white-space: nowrap; }
.drop {
  appearance: none;
  width: 100%;
  height: 20px;
  padding: 0 16px 0 2px;
  border: 1px solid #707070;
  border-radius: 2px;
  background:
    linear-gradient(#000, #000) right 4px top 8px / 7px 1px no-repeat,
    linear-gradient(#000, #000) right 5px top 9px / 5px 1px no-repeat,
    linear-gradient(#000, #000) right 6px top 10px / 3px 1px no-repeat,
    linear-gradient(#000, #000) right 7px top 11px / 1px 1px no-repeat,
    linear-gradient(#f2f2f2, #e8e8e8 50%, #dadada 50%, #cfcfcf);
}
.auto { margin-top: 8px; padding: 4px 10px 7px 8px; }
.auto legend { margin-left: -4px; }
.result { display: flex; height: 108px; border: 1px solid #a8a8a8; background: #fff; }
.lines { flex: 1; padding: 2px 0 0 26px; line-height: 16px; white-space: nowrap; }
.scroll { display: flex; flex-direction: column; justify-content: space-between; align-items: center; width: 17px; padding: 7px 0; background: #f0f0f0; }
.tri-up, .tri-down { width: 8px; height: 4px; background: #777; clip-path: polygon(50% 0, 100% 100%, 0 100%); }
.tri-down { clip-path: polygon(0 0, 100% 0, 50% 100%); }
.manual { margin-top: 14px; padding: 3px 10px 6px 1px; }
.manual legend { margin-left: 3px; }
.note { display: block; width: 100%; height: 44px; border: 1px solid #e0e3ea; border-top-color: #a8a8a8; background: #fff; resize: none; }
.manual-row { display: flex; align-items: center; margin-top: 7px; padding-left: 8px; white-space: nowrap; }
.manual-row label { margin: 0 8px 0 23px; }
.res { flex: 1; min-width: 0; height: 20px; padding: 0 3px; border: 1px solid #e0e3ea; border-top-color: #a8a8a8; background: #ffffe1; }
.btn {
  height: 24px;
  padding: 0;
  border: 1px solid #707070;
  border-radius: 3px;
  background: linear-gradient(#f3f3f3, #ebebeb 50%, #dadada 50%, #cdcdcd);
  box-shadow: inset 0 0 0 1px #fafafa;
  white-space: nowrap;
}
.w-s { width: 89px; }
.w-m { width: 107px; }
.w-l { width: 113px; }
.primary { width: 73px; margin-left: auto; border-color: #2c90b8; background: linear-gradient(#eaf6fb, #d4edf8 50%, #bfe4f5 50%, #acd9ef); box-shadow: inset 0 0 0 1px #4fd0f4; }
.actions { display: flex; gap: 18px; margin-top: 12px; }

/* annotation layer */
.arrows { position: absolute; left: 0; top: 0; pointer-events: none; }
```
